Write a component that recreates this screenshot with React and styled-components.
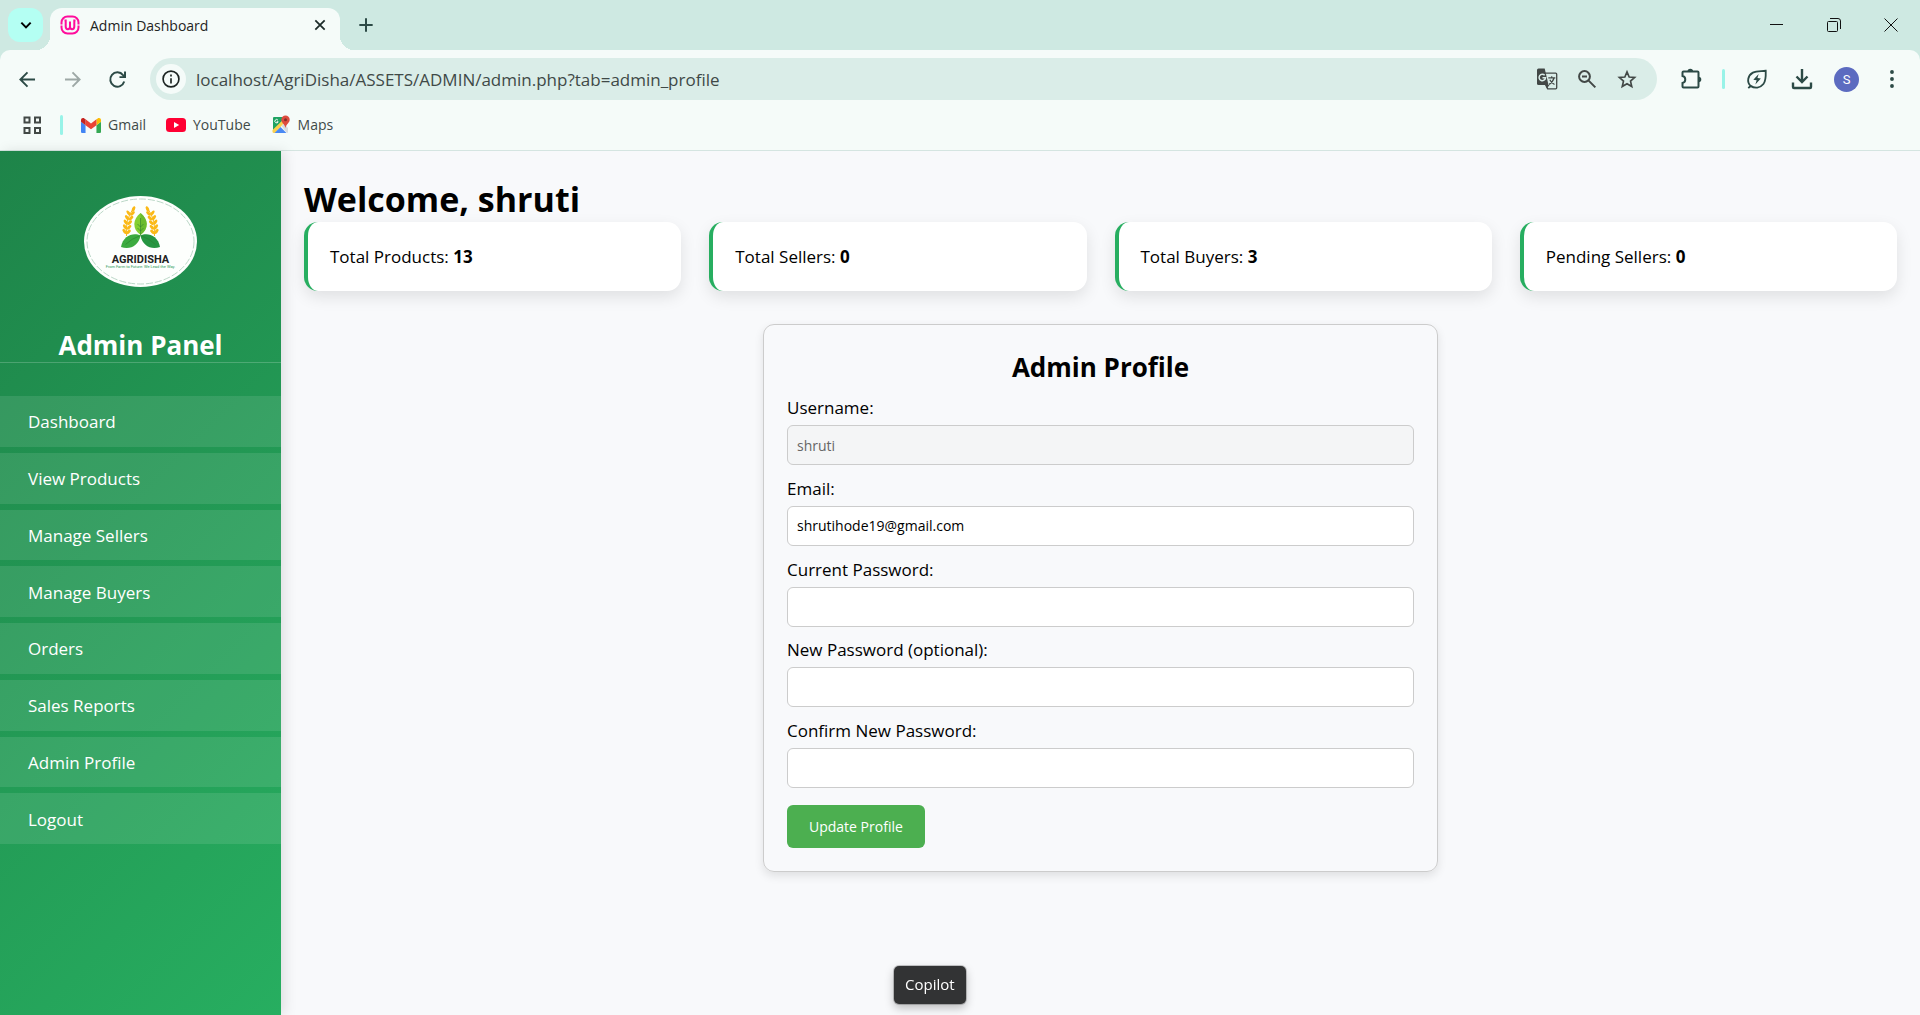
import React from "react";
import styled, { createGlobalStyle } from "styled-components";

const GlobalStyle = createGlobalStyle`
  *, *::before, *::after { box-sizing: border-box; }
  body {
    margin: 0;
    font-family: "Open Sans", "Noto Sans", sans-serif;
    color: #000;
    background: #f8f9fb;
  }
  h1, h2, p, ul { margin: 0; padding: 0; }
  button, input { font-family: inherit; }
  button { border: 0; background: none; padding: 0; cursor: pointer; }
  svg { display: block; flex: none; }
`;

/* ---------- browser frame ---------- */

const Page = styled.div`
  min-height: 100vh;
  display: flex;
  flex-direction: column;
`;

const TabStrip = styled.header`
  display: flex;
  align-items: center;
  height: 50px;
  padding-left: 8px;
  background: #cee9e2;
`;

const TabSearch = styled.button`
  display: grid;
  place-items: center;
  width: 35px;
  height: 34px;
  border-radius: 12px;
  background: #b4fff3;
`;

const Tab = styled.div`
  position: relative;
  display: flex;
  align-items: center;
  gap: 10px;
  width: 290px;
  height: 42px;
  margin: 8px 0 0 7px;
  padding: 0 10px 8px;
  border-radius: 12px 12px 0 0;
  background: #f5fbf9;
  font-size: 14px;
  color: #1f2423;

  &::before, &::after {
    content: "";
    position: absolute;
    bottom: 0;
    width: 14px;
    height: 14px;
  }
  &::before {
    right: 100%;
    background: radial-gradient(circle at 0 0, transparent 14px, #f5fbf9 14px);
  }
  &::after {
    left: 100%;
    background: radial-gradient(circle at 100% 0, transparent 14px, #f5fbf9 14px);
  }
`;

const TabTitle = styled.span`
  flex: 1;
  white-space: nowrap;
`;

const SmallButton = styled.button`
  display: grid;
  place-items: center;
  width: 20px;
  height: 20px;
  color: #1c2b29;
`;

const NewTab = styled(SmallButton)`
  width: 52px;
  height: 50px;
  color: #2c4a46;
`;

const WindowControls = styled.div`
  display: flex;
  margin-left: auto;
  padding-right: 1px;
`;

const WindowButton = styled.button`
  display: grid;
  place-items: center;
  width: 57px;
  height: 48px;
  color: #111;
`;

const ToolbarBack = styled.div`
  background: #cee9e2;
`;

const Toolbar = styled.div`
  display: flex;
  align-items: center;
  height: 58px;
  padding: 0 6px 0 5px;
  border-radius: 10px 10px 0 0;
  background: #f5fbf9;
`;

const ToolButton = styled.button`
  display: grid;
  place-items: center;
  flex: none;
  width: 45px;
  height: 40px;
  color: ${(p) => (p.$muted ? "#9da8a6" : "#2c4a46")};
`;

const AddressBar = styled.div`
  flex: 1;
  display: flex;
  align-items: center;
  height: 42px;
  margin: 0 11px 0 10px;
  padding: 0 10px 0 6px;
  border-radius: 21px;
  background: #daede8;
`;

const SiteInfo = styled.button`
  display: grid;
  place-items: center;
  width: 30px;
  height: 30px;
  border-radius: 50%;
  background: #f5fbf9;
  color: #1c2422;
`;

const Address = styled.input`
  flex: 1;
  min-width: 0;
  margin-left: 10px;
  padding: 0;
  border: 0;
  outline: 0;
  background: transparent;
  font-size: 17px;
  color: #3f4947;
`;

const AddressButton = styled.button`
  display: grid;
  place-items: center;
  width: 40px;
  height: 40px;
  color: #424846;
`;

const Divider = styled.span`
  flex: none;
  width: 3px;
  height: 20px;
  margin: 0 ${(p) => p.$gap}px;
  border-radius: 2px;
  background: #98f3e8;
`;

const Avatar = styled.span`
  display: grid;
  place-items: center;
  width: 25px;
  height: 25px;
  border-radius: 50%;
  background: #5c6bc0;
  color: #fff;
  font: 13px/25px Roboto, sans-serif;
`;

const Bookmarks = styled.nav`
  display: flex;
  align-items: center;
  height: 43px;
  padding: 0 22px 8px;
  border-bottom: 1px solid #d5e5e1;
  background: #f5fbf9;
`;

const BookmarkLinks = styled.div`
  display: flex;
  gap: 20px;
`;

const Bookmark = styled.a`
  display: flex;
  align-items: center;
  gap: 7px;
  font-size: 14px;
  line-height: 20px;
  color: #3f4a48;
  text-decoration: none;
`;

/* ---------- dashboard ---------- */

const Dashboard = styled.div`
  flex: 1;
  display: flex;
`;

const Sidebar = styled.aside`
  flex: none;
  width: 281px;
  padding-top: 45px;
  background: linear-gradient(135deg, #1e8449, #27ae60);
  box-shadow: 4px 0 12px rgba(0, 0, 0, 0.1);
  color: #fff;
`;

const Logo = styled.svg`
  margin: 0 auto;
`;

const SidebarTitle = styled.h2`
  margin: 42px 0 33px;
  border-bottom: 1px solid rgba(255, 255, 255, 0.2);
  font-size: 26px;
  line-height: 33px;
  font-weight: 700;
  text-align: center;
`;

const Menu = styled.ul`
  display: grid;
  grid-auto-rows: 1fr;
  gap: 6px;
  height: 448px;
  list-style: none;
`;

const MenuLink = styled.a`
  display: flex;
  align-items: center;
  height: 100%;
  padding: 1px 28px 0;
  background: rgba(255, 255, 255, 0.1);
  font-size: 17px;
  color: #fff;
  text-decoration: none;
`;

const Main = styled.main`
  flex: 1;
  min-width: 0;
  padding: 25px 23px 22px;
`;

const Welcome = styled.h1`
  font-size: 34px;
  line-height: 46px;
  font-weight: 700;
`;

const Stats = styled.section`
  display: grid;
  grid-template-columns: repeat(4, 1fr);
  gap: 28px;
`;

const Stat = styled.p`
  padding: 22px;
  border-left: 4px solid #27ae60;
  border-radius: 14px;
  background: #fff;
  box-shadow: 0 6px 16px rgba(0, 0, 0, 0.1);
  font-size: 17px;
  line-height: 25px;
`;

const Profile = styled.form`
  width: 675px;
  margin: 33px auto 0;
  padding: 23px;
  border: 1px solid #ccc;
  border-radius: 11px;
  box-shadow: 0 4px 10px rgba(0, 0, 0, 0.1);
`;

const ProfileTitle = styled.h2`
  margin-bottom: 10px;
  font-size: 26px;
  line-height: 38px;
  font-weight: 700;
  text-align: center;
`;

const Fields = styled.div`
  display: grid;
  grid-auto-rows: 1fr;
  height: 404px;
`;

const Field = styled.div`
  display: flex;
  flex-direction: column;
  gap: 5px;
`;

const Label = styled.label`
  font-size: 17px;
  line-height: 24px;
`;

const Input = styled.input`
  height: 40px;
  padding: 0 9px;
  border: 1px solid #ccc;
  border-radius: 6px;
  background: #fff;
  font-size: 14px;
  color: #000;

  &:disabled {
    background: #f4f5f6;
    color: #666;
  }
`;

const Submit = styled.button`
  display: block;
  height: 43px;
  margin-top: 5px;
  padding: 0 22px;
  border-radius: 6px;
  background: #4caf50;
  font-size: 14px;
  color: #fff;
`;

const Tooltip = styled.div`
  position: fixed;
  left: 894px;
  bottom: 11px;
  padding: 0 11px 2px;
  border-radius: 5px;
  background: #323334;
  box-shadow: 0 0 0 1px rgba(0, 0, 0, 0.2), 0 4px 10px rgba(0, 0, 0, 0.25);
  font-size: 15px;
  line-height: 36px;
  color: #fff;
`;

/* ---------- icons ---------- */

const Icon = ({ size = 24, w = 2, children, ...rest }) => (
  <svg width={size} height={size} viewBox="0 0 24 24" fill="none" stroke="currentColor" strokeWidth={w} aria-hidden="true" {...rest}>
    {children}
  </svg>
);

const WampIcon = () => (
  <svg width="20" height="20" viewBox="0 0 20 20" fill="none" stroke="#ff0d9c" aria-hidden="true">
    <rect x="1.500" y="1.500" width="17" height="17" rx="6" strokeWidth="2" />
    <path d="M0 10h3.500M16.500 10H20" stroke="#f5fbf9" strokeWidth="1" />
    <path d="M4.500 5.500h1.200v6q0 2.700 2.150 2.700T10 11.500V6.500M10 11.500q0 2.700 2.150 2.700t2.150-2.700v-6h1.200" strokeWidth="2" />
  </svg>
);

const GmailIcon = () => (
  <svg width="20" height="15" viewBox="52 42 88 66" aria-hidden="true">
    <path fill="#4285f4" d="M58 108h14V74L52 59v43c0 3.320 2.690 6 6 6" />
    <path fill="#34a853" d="M120 108h14c3.320 0 6-2.690 6-6V59l-20 15" />
    <path fill="#fbbc04" d="M120 48v26l20-15v-8c0-7.420-8.470-11.650-14.400-7.200" />
    <path fill="#ea4335" d="M72 74V48l24 18 24-18v26L96 92" />
    <path fill="#c5221f" d="M52 51v8l20 15V48l-5.600-4.200c-5.940-4.450-14.400-.220-14.400 7.200" />
  </svg>
);

const YouTubeIcon = () => (
  <svg width="20" height="14" viewBox="0 0 20 14" aria-hidden="true">
    <rect width="20" height="14" rx="3.500" fill="#ff0033" />
    <path d="M8 4l5.200 3L8 10z" fill="#fff" />
  </svg>
);

const MapsIcon = () => (
  <svg width="20" height="20" viewBox="0 0 20 20" aria-hidden="true">
    <path d="M3 2h12l-13 14V3q0-1 1-1z" fill="#1ea362" />
    <path d="M1.500 15L12 5l2 2L4 18H3q-1.500 0-1.500-1.500z" fill="#fcd04b" />
    <path d="M3.500 18L9.500 12l6 6z" fill="#4a89f3" />
    <path d="M10.500 11L13 8.500l4 4.500v4q0 1-1 1z" fill="#d7dbdf" />
    <path d="M6.900 5.100a1.700 1.700 0 1 0 .300 1.700H5.700" fill="none" stroke="#fff" strokeWidth="1" />
    <path d="M14.500 0.500a4.200 4.200 0 0 1 4.200 4.200c0 3-3.200 4-4.200 8.300-1-4.300-4.200-5.300-4.200-8.300A4.200 4.200 0 0 1 14.500 .5z" fill="#dd4b3e" />
    <circle cx="14.500" cy="4.700" r="1.500" fill="#822f2b" />
  </svg>
);

const TranslateIcon = () => (
  <svg width="22" height="22" viewBox="0 0 22 22" fill="none" stroke="currentColor" aria-hidden="true">
    <path d="M8.500 5.200h11.200q1 0 1 1v13.600q0 1-1 1h-8L9.800 16" strokeWidth="1.300" />
    <path d="M2.500.5h6.200l3.800 16.500H2.500Q1 17 1 15.500V2Q1 .5 2.500.5z" fill="currentColor" stroke="none" />
    <path d="M9 17h4.500l-2.700 3.500z" fill="currentColor" stroke="none" />
    <path d="M8.700 7.300a3.200 3.200 0 1 0 .800 2.500H6.500" stroke="#daede8" strokeWidth="1.500" />
    <path d="M12.300 9.800h7M15.700 8.300v1.500M18 10q-1 4-5 6.500M13.800 11.800q1.500 3 4.700 4.700" strokeWidth="1.200" />
  </svg>
);

const LeafIcon = () => (
  <Icon size={22}>
    <path d="M5 19.500C.5 15 2 8 7.500 5 11.500 3 16 3.600 21.500 3c.200 6 .500 10.500-2.500 14.500-3.500 4.500-9.500 5-14 2zM5 19.500L2.500 22" />
    <path d="M13.800 6.500L8 12.700l3.600.600-1.400 4.700 6-6.500-3.700-.500z" fill="currentColor" stroke="none" />
  </Icon>
);

const wheatRows = [0, 1, 2, 3, 4];

const Wheat = ({ flip }) => (
  <g transform={flip ? "translate(113 0) scale(-1 1)" : undefined}>
    <path d="M42.500 40Q41 24 49 13" fill="none" stroke="#f9b81a" strokeWidth="1" />
    <ellipse cx="49.500" cy="13" rx="1.500" ry="3" transform="rotate(25 49.500 13)" fill="#fbb917" />
    {wheatRows.map((i) => (
      <g key={i} fill="#fbb917" transform={`translate(${[46.5, 45, 43.7, 43, 42.5][i]} ${18 + i * 4.600})`}>
        <ellipse cx="-2" cy="-1" rx="1.500" ry="2.900" transform="rotate(-35 -2 -1)" />
        <ellipse cx="2" cy="-.500" rx="1.500" ry="2.900" transform="rotate(48 2 -.500)" />
      </g>
    ))}
  </g>
);

const BrandLogo = () => (
  <Logo width="113" height="91" viewBox="0 0 113 91" role="img" aria-label="Agridisha">
    <ellipse cx="56.500" cy="45.500" rx="56.500" ry="45.500" fill="#fdfffd" />
    <ellipse cx="56.500" cy="45.500" rx="53.500" ry="42.500" fill="none" stroke="#bcd8c8" strokeWidth="1" strokeDasharray="7 2" />
    <Wheat />
    <Wheat flip />
    <path d="M56.500 17C64.500 23 65 33 56.500 39 48 33 48.500 23 56.500 17z" fill="#84cf32" />
    <path d="M56.500 17C64.500 23 65 33 56.500 39z" fill="#6abb2f" />
    <path d="M56.500 39.500C50 36 39 39 37 51 46 54 54.500 50 56.500 39.500z" fill="#3cab3f" />
    <path d="M56.500 39.500C63 36 74 39 76 51 67 54 58.500 50 56.500 39.500z" fill="#259541" />
    <path d="M56.500 22v17M56.500 39.500q-9 3-15 9M56.500 39.500q9 3 15 9M56.500 31l3-3M56.500 31l-3-3M56.500 35l3-3M56.500 35l-3-3" fill="none" stroke="#2c7f2f" strokeWidth=".6" />
    <text x="56.500" y="67" textAnchor="middle" fontFamily="Roboto, sans-serif" fontWeight="700" fontSize="11" fill="#222">AGRIDISHA</text>
    <text x="56.500" y="72" textAnchor="middle" fontFamily="Roboto, sans-serif" fontSize="4" fill="#2d9a5a">From Farm to Future: We Lead the Way.</text>
  </Logo>
);

/* ---------- content ---------- */

const bookmarks = [
  { name: "Gmail", icon: <GmailIcon /> },
  { name: "YouTube", icon: <YouTubeIcon /> },
  { name: "Maps", icon: <MapsIcon /> },
];

const menu = [
  "Dashboard", "View Products", "Manage Sellers", "Manage Buyers",
  "Orders", "Sales Reports", "Admin Profile", "Logout",
];

const stats = [
  ["Total Products", 13],
  ["Total Sellers", 0],
  ["Total Buyers", 3],
  ["Pending Sellers", 0],
];

const fields = [
  { id: "username", label: "Username:", type: "text", value: "shruti", disabled: true },
  { id: "email", label: "Email:", type: "email", value: "shrutihode19@gmail.com" },
  { id: "current", label: "Current Password:", type: "password" },
  { id: "new", label: "New Password (optional):", type: "password" },
  { id: "confirm", label: "Confirm New Password:", type: "password" },
];

function BrowserFrame() {
  return (
    <>
      <TabStrip>
        <TabSearch aria-label="Search tabs">
          <Icon size={16} w={3}><path d="M5 8.500l7 7 7-7" /></Icon>
        </TabSearch>
        <Tab>
          <WampIcon />
          <TabTitle>Admin Dashboard</TabTitle>
          <SmallButton aria-label="Close tab">
            <Icon size={14} w={3}><path d="M4 4l16 16M20 4L4 20" /></Icon>
          </SmallButton>
        </Tab>
        <NewTab aria-label="New tab">
          <Icon size={16} w={3}><path d="M12 2v20M2 12h20" /></Icon>
        </NewTab>
        <WindowControls>
          <WindowButton aria-label="Minimize">
            <svg width="14" height="14" viewBox="0 0 14 14" stroke="currentColor"><path d="M0 6.500h13" /></svg>
          </WindowButton>
          <WindowButton aria-label="Restore">
            <svg width="14" height="14" viewBox="0 0 14 14" fill="none" stroke="currentColor">
              <rect x=".5" y="3.500" width="10" height="10" rx="1" />
              <path d="M3 .5h8q2.500 0 2.500 2.500v8" />
            </svg>
          </WindowButton>
          <WindowButton aria-label="Close">
            <svg width="14" height="14" viewBox="0 0 14 14" stroke="currentColor"><path d="M.5.5l13 13M13.500.5l-13 13" /></svg>
          </WindowButton>
        </WindowControls>
      </TabStrip>
      <ToolbarBack>
        <Toolbar>
          <ToolButton aria-label="Back">
            <Icon size={19} w={2.4}><path d="M21.500 12H4M12 3l-9 9 9 9" /></Icon>
          </ToolButton>
          <ToolButton aria-label="Forward" $muted>
            <Icon size={19} w={2.4}><path d="M2.500 12H20M12 3l9 9-9 9" /></Icon>
          </ToolButton>
          <ToolButton aria-label="Reload">
            <Icon size={19} w={2.500}><path d="M20.500 14.500A9 9 0 1 1 19 6.500l2 2M21.500 2v7h-7" /></Icon>
          </ToolButton>
          <AddressBar>
            <SiteInfo aria-label="Site information">
              <Icon size={20}>
                <circle cx="12" cy="12" r="9.500" />
                <path d="M12 11v6.500M12 6.500v2.500" />
              </Icon>
            </SiteInfo>
            <Address aria-label="Address" defaultValue="localhost/AgriDisha/ASSETS/ADMIN/admin.php?tab=admin_profile" />
            <AddressButton aria-label="Translate"><TranslateIcon /></AddressButton>
            <AddressButton aria-label="Zoom">
              <Icon size={20} w={2.400}>
                <circle cx="9" cy="9" r="6.500" />
                <path d="M14 14l8 8M6 9h6" />
              </Icon>
            </AddressButton>
            <AddressButton aria-label="Bookmark this tab">
              <Icon size={20}>
                <path d="M12 3.500l2.600 6.100 6.600.6-5 4.400 1.500 6.500-5.700-3.500-5.700 3.500 1.500-6.500-5-4.400 6.600-.6z" />
              </Icon>
            </AddressButton>
          </AddressBar>
          <ToolButton aria-label="Extensions">
            <svg width="22" height="22" viewBox="0 0 22 22" fill="none" stroke="currentColor" strokeWidth="2" aria-hidden="true">
              <path d="M3.500 3.500h14q1 0 1 1v14q0 1-1 1h-14q-1 0-1-1v-3.500a3.600 3.600 0 0 0 0-7V4.500q0-1 1-1z" />
              <path d="M7.500 3.500a2.800 2.800 0 0 1 5.600 0zM18.500 8.700a2.800 2.800 0 0 1 0 5.600z" fill="currentColor" stroke="none" />
            </svg>
          </ToolButton>
          <Divider $gap={9} />
          <ToolButton aria-label="Energy saver"><LeafIcon /></ToolButton>
          <ToolButton aria-label="Downloads">
            <svg width="22" height="22" viewBox="0 0 22 22" fill="none" stroke="currentColor" strokeWidth="2.400" aria-hidden="true">
              <path d="M11 1v12.500M5.500 8.500L11 14l5.500-5.500M2 14.500V19q0 1 1 1h16q1 0 1-1v-4.500" />
            </svg>
          </ToolButton>
          <ToolButton aria-label="Profile"><Avatar>S</Avatar></ToolButton>
          <ToolButton aria-label="Menu">
            <Icon size={20} fill="currentColor" stroke="none">
              <circle cx="12" cy="3.600" r="2.300" />
              <circle cx="12" cy="12" r="2.300" />
              <circle cx="12" cy="20.400" r="2.300" />
            </Icon>
          </ToolButton>
        </Toolbar>
      </ToolbarBack>
      <Bookmarks aria-label="Bookmarks">
        <SmallButton aria-label="Apps">
          <svg width="20" height="20" viewBox="0 0 20 20" fill="none" stroke="#424846" strokeWidth="2">
            <path d="M2.500 2.500h5v5h-5zM13 2.500h5v5h-5zM2.500 13h5v5h-5zM13 13h5v5h-5z" />
          </svg>
        </SmallButton>
        <Divider $gap={18} />
        <BookmarkLinks>
          {bookmarks.map((b) => (
            <Bookmark key={b.name} href="#">{b.icon}{b.name}</Bookmark>
          ))}
        </BookmarkLinks>
      </Bookmarks>
    </>
  );
}

export default function App() {
  return (
    <Page>
      <GlobalStyle />
      <BrowserFrame />
      <Dashboard>
        <Sidebar>
          <BrandLogo />
          <SidebarTitle>Admin Panel</SidebarTitle>
          <nav aria-label="Admin">
            <Menu>
              {menu.map((name) => (
                <li key={name}><MenuLink href="#">{name}</MenuLink></li>
              ))}
            </Menu>
          </nav>
        </Sidebar>
        <Main>
          <Welcome>Welcome, shruti</Welcome>
          <Stats>
            {stats.map(([name, count]) => (
              <Stat key={name}>{name}: <strong>{count}</strong></Stat>
            ))}
          </Stats>
          <Profile onSubmit={(e) => e.preventDefault()}>
            <ProfileTitle>Admin Profile</ProfileTitle>
            <Fields>
              {fields.map((f) => (
                <Field key={f.id}>
                  <Label htmlFor={f.id}>{f.label}</Label>
                  <Input id={f.id} type={f.type} defaultValue={f.value} disabled={f.disabled} />
                </Field>
              ))}
            </Fields>
            <Submit type="submit">Update Profile</Submit>
          </Profile>
        </Main>
      </Dashboard>
      <Tooltip role="tooltip">Copilot</Tooltip>
    </Page>
  );
}
